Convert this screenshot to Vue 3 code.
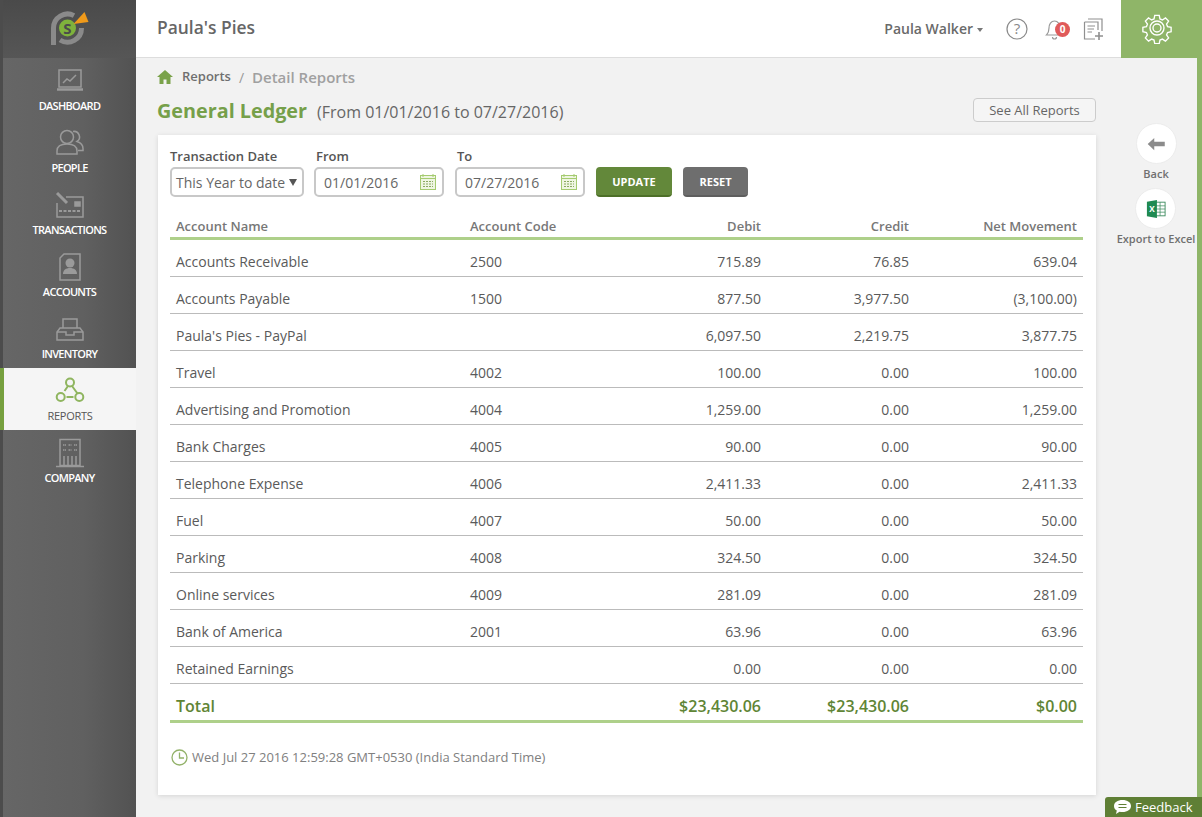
<script setup>
const navItems = [
  { label: 'DASHBOARD', icon: 'dashboard' },
  { label: 'PEOPLE', icon: 'people' },
  { label: 'TRANSACTIONS', icon: 'transactions' },
  { label: 'ACCOUNTS', icon: 'accounts' },
  { label: 'INVENTORY', icon: 'inventory' },
  { label: 'REPORTS', icon: 'reports', active: true },
  { label: 'COMPANY', icon: 'company' }
];

const rows = [
  ['Accounts Receivable', '2500', '715.89', '76.85', '639.04'],
  ['Accounts Payable', '1500', '877.50', '3,977.50', '(3,100.00)'],
  ["Paula's Pies - PayPal", '', '6,097.50', '2,219.75', '3,877.75'],
  ['Travel', '4002', '100.00', '0.00', '100.00'],
  ['Advertising and Promotion', '4004', '1,259.00', '0.00', '1,259.00'],
  ['Bank Charges', '4005', '90.00', '0.00', '90.00'],
  ['Telephone Expense', '4006', '2,411.33', '0.00', '2,411.33'],
  ['Fuel', '4007', '50.00', '0.00', '50.00'],
  ['Parking', '4008', '324.50', '0.00', '324.50'],
  ['Online services', '4009', '281.09', '0.00', '281.09'],
  ['Bank of America', '2001', '63.96', '0.00', '63.96'],
  ['Retained Earnings', '', '0.00', '0.00', '0.00']
];
</script>

<template>
  <div class="app">
    <aside class="sidebar">
      <div class="logo">
        <svg width="44" height="36" viewBox="0 0 44 36">
          <path d="M5.500 34V17A14 14 0 0 1 26 4.600" fill="none" stroke="#8a8a8a" stroke-width="5" />
          <path d="M33.500 17A14 14 0 0 1 12 29" fill="none" stroke="#8a8a8a" stroke-width="5" />
          <circle cx="19.500" cy="17" r="8.500" fill="#7fb23c" />
          <text x="19.500" y="22.500" class="logo-s" text-anchor="middle">S</text>
          <path d="M25.500 13L36.500 1L40.500 11Z" fill="#f09a1a" />
        </svg>
      </div>
      <nav class="nav">
        <div v-for="item in navItems" :key="item.label" class="nav-item" :class="{ active: item.active }">
          <svg width="30" height="30" viewBox="0 0 30 30" fill="none" stroke="#9a9a9a" stroke-width="1.500">
            <template v-if="item.icon === 'dashboard'">
              <rect x="4" y="4" width="22" height="17" />
              <path d="M2 23.500H28" stroke-width="2.500" />
              <path d="M8 17l4-4 3 2 6-6" />
            </template>
            <template v-else-if="item.icon === 'people'">
              <circle cx="12" cy="9" r="6.500" />
              <path d="M2 26v-3c0-5 4-7 10-7s10 2 10 7v3z" />
              <path d="M18 3.500a5.500 5.500 0 0 1 4 10c3 1 6 3 6 7v2h-5" />
            </template>
            <template v-else-if="item.icon === 'transactions'">
              <path d="M11 7H28V27H2V13" />
              <path d="M2 3l10 10" stroke-width="3" />
              <rect x="20" y="12" width="5" height="4" fill="#9a9a9a" />
              <path d="M4 21H26" stroke-dasharray="3 1.500" stroke-width="2" />
            </template>
            <template v-else-if="item.icon === 'accounts'">
              <path d="M9 2H25V28H5V6Z" />
              <circle cx="15" cy="11" r="4.500" fill="#9a9a9a" stroke="none" />
              <path d="M8 22c0-4 3-6 7-6s7 2 7 6z" fill="#9a9a9a" stroke="none" />
            </template>
            <template v-else-if="item.icon === 'inventory'">
              <path d="M8 14V5H22V14" />
              <path d="M5 14H25L28 18V26H2V18Z" />
              <path d="M2 18H11V21H19V18H28" />
            </template>
            <template v-else-if="item.icon === 'reports'">
              <g stroke="#8fb55f" stroke-width="2">
                <circle cx="15" cy="6.500" r="4" />
                <circle cx="5.700" cy="21" r="4" />
                <circle cx="24.300" cy="21" r="4" />
                <path d="M13 10l-3.500 5M17 10l5.500 7.500M11.500 21h7" />
              </g>
            </template>
            <template v-else>
              <rect x="5" y="1.500" width="20" height="26" />
              <path d="M1 28.500H29" />
              <path d="M8 7h3M13.500 7h3M19 7h3M8 12h3M13.500 12h3M19 12h3" stroke-dasharray="1.500 .5" />
              <path d="M9 18v9M13 18v9M17 18v9M21 18v9" />
            </template>
          </svg>
          <span>{{ item.label }}</span>
        </div>
      </nav>
    </aside>

    <div class="content">
      <header class="topbar">
        <h1 class="company">Paula's Pies</h1>
        <div class="top-right">
          <span class="user">Paula Walker<i class="caret"></i></span>
          <svg width="24" height="24" viewBox="0 0 24 24" class="top-icon help">
            <circle cx="12" cy="12" r="10" fill="none" stroke="#8a8a8a" stroke-width="1.200" />
            <text x="12" y="17" class="help-mark" text-anchor="middle">?</text>
          </svg>
          <div class="bell">
            <svg width="22" height="22" viewBox="0 0 22 22" fill="none" stroke="#999" stroke-width="1.200">
              <path d="M1.500 17c2-2 2.500-4 2.500-7 0-3.500 2-7 5.500-7s5.500 3.500 5.500 7c0 3 .5 5 2.500 7z" />
              <path d="M7.500 19a2 2 0 0 0 4 0" />
            </svg>
            <span class="badge">0</span>
          </div>
          <svg width="22" height="24" viewBox="0 0 22 24" fill="none" stroke="#8f8f8f" stroke-width="1.200" class="top-icon">
            <path d="M6 2H20V14M2.500 5H16V13M2.500 5V22H13" />
            <path d="M5.500 9H13M5.500 12H12M5.500 15H10" />
            <path d="M17 15V23M13 19H21" stroke-width="1.600" />
          </svg>
        </div>
        <div class="settings">
          <svg width="32" height="32" viewBox="0 0 32 32" fill="none" stroke="#fff">
            <path stroke-width="1.500" d="M13.500 2h5l.8 4 2.700 1.100 3.400-2.300 3.500 3.500-2.300 3.400 1.100 2.700 4 .8v5l-4 .8-1.100 2.700 2.300 3.400-3.500 3.500-3.400-2.300-2.700 1.100-.8 4h-5l-.8-4-2.700-1.100-3.400 2.300-3.500-3.500 2.300-3.400-1.100-2.700-4-.8v-5l4-.8 1.100-2.700-2.300-3.400 3.500-3.500 3.400 2.300 2.700-1.100z" transform="translate(1.600 1.600) scale(.9)" />
            <circle cx="16" cy="16" r="7" stroke-width="1.400" />
            <circle cx="16" cy="16" r="4" stroke-width="1.400" />
          </svg>
        </div>
      </header>

      <div class="body">
        <main class="main">
          <div class="breadcrumb">
            <svg width="16" height="14" viewBox="0 0 16 14"><path d="M8 0L16 7H13.500V14H9.500V9.500H6.500V14H2.500V7H0Z" fill="#7aa24a" /></svg>
            <span class="crumb">Reports</span>
            <span class="crumb-sep">/</span>
            <span class="crumb-current">Detail Reports</span>
          </div>
          <div class="title-row">
            <h2 class="title">General Ledger</h2>
            <span class="range">(From 01/01/2016 to 07/27/2016)</span>
            <button class="see-all">See All Reports</button>
          </div>

          <section class="card">
            <div class="filters">
              <div class="field first">
                <label>Transaction Date</label>
                <div class="input select">This Year to date<i class="select-arrow"></i></div>
              </div>
              <div class="field">
                <label>From</label>
                <div class="input date">
                  01/01/2016
                  <svg width="18" height="18" viewBox="0 0 18 18" fill="#eff6e2" stroke="#a5cb70"><rect x="1.500" y="2.500" width="15" height="14" /><path d="M4 1v3M14 1v3M1.500 5.500h15" /><path d="M4 8.500h10M4 11h10M4 13.500h10" stroke="#8aa860" stroke-dasharray="2 1" /></svg>
                </div>
              </div>
              <div class="field">
                <label>To</label>
                <div class="input date to">
                  07/27/2016
                  <svg width="18" height="18" viewBox="0 0 18 18" fill="#eff6e2" stroke="#a5cb70"><rect x="1.500" y="2.500" width="15" height="14" /><path d="M4 1v3M14 1v3M1.500 5.500h15" /><path d="M4 8.500h10M4 11h10M4 13.500h10" stroke="#8aa860" stroke-dasharray="2 1" /></svg>
                </div>
              </div>
              <button class="btn update">UPDATE</button>
              <button class="btn reset">RESET</button>
            </div>

            <table class="ledger">
              <colgroup>
                <col style="width: 294px" />
                <col style="width: 150px" />
                <col style="width: 153px" />
                <col style="width: 148px" />
                <col style="width: 168px" />
              </colgroup>
              <thead>
                <tr>
                  <th>Account Name</th>
                  <th>Account Code</th>
                  <th class="num">Debit</th>
                  <th class="num">Credit</th>
                  <th class="num">Net Movement</th>
                </tr>
              </thead>
              <tbody>
                <tr v-for="row in rows" :key="row[0]">
                  <td v-for="(cell, i) in row" :key="i" :class="{ num: i > 1 }">{{ cell }}</td>
                </tr>
              </tbody>
              <tfoot>
                <tr>
                  <td>Total</td>
                  <td></td>
                  <td class="num">$23,430.06</td>
                  <td class="num">$23,430.06</td>
                  <td class="num">$0.00</td>
                </tr>
              </tfoot>
            </table>

            <div class="stamp">
              <svg width="17" height="17" viewBox="0 0 17 17" fill="none" stroke="#93b26a" stroke-width="1.300"><circle cx="8.500" cy="8.500" r="7.500" /><path d="M8.500 3.500V9H13" /></svg>
              Wed Jul 27 2016 12:59:28 GMT+0530 (India Standard Time)
            </div>
          </section>
        </main>

        <aside class="actions">
          <div class="action">
            <div class="circle">
              <svg width="20" height="14" viewBox="0 0 22 16"><path d="M9 1L1.500 8 9 15V10.500H21V5.500H9Z" fill="#8b8b8b" /></svg>
            </div>
            <span>Back</span>
          </div>
          <div class="action">
            <div class="circle">
              <svg width="20" height="20" viewBox="0 0 22 22">
                <rect x="10" y="3.500" width="11" height="15" fill="#fff" stroke="#3d8b5f" />
                <path d="M10 7.500H21M10 11H21M10 14.500H21M15.500 3.500V18.500" stroke="#3d8b5f" stroke-width=".8" />
                <path d="M1 3L12 1V21L1 19Z" fill="#1f8a52" />
                <text x="6.500" y="14" class="xl" text-anchor="middle">X</text>
              </svg>
            </div>
            <span>Export to Excel</span>
          </div>
        </aside>
      </div>
    </div>

    <div class="feedback">
      <svg width="19" height="16" viewBox="0 0 19 16"><path d="M9.500 1C14.500 1 18 3.500 18 7s-3.500 6-8.500 6c-1 0-2 0-3-.3L3 15l.8-3.500C2 10.500 1 9 1 7c0-3.500 3.500-6 8.500-6z" fill="#fff" /><path d="M5.500 5.500h8M5.500 8.500h8" stroke="#5f7f35" /></svg>
      Feedback
    </div>
  </div>
</template>

<style>
html, body {
  margin: 0;
  background: #f2f2f2;
}
</style>

<style scoped>
.app {
  position: relative;
  display: flex;
  width: 1202px;
  height: 817px;
  overflow: hidden;
  font-family: "Open Sans", "Liberation Sans", sans-serif;
  color: #555;
}

.sidebar {
  flex: 0 0 136px;
  border-left: 3px solid #4c4c4c;
  box-sizing: border-box;
  background: linear-gradient(to right, #666 0%, #606060 60%, #525252 100%);
}

.logo {
  height: 58px;
  display: flex;
  align-items: center;
  justify-content: center;
  box-sizing: border-box;
  background: linear-gradient(to bottom, #4a4a4a, #565656);
}

.logo-s {
  font: 700 15px "Open Sans", sans-serif;
  fill: #4b4b4b;
}

.nav-item {
  height: 62px;
  box-sizing: border-box;
  padding-top: 8px;
  display: flex;
  flex-direction: column;
  align-items: center;
  font-size: 11px;
  font-weight: 600;
  letter-spacing: -0.7px;
  color: #fff;
}

.nav-item span {
  margin-top: 2px;
  line-height: 16px;
}

.nav-item.active {
  background: #f5f5f5;
  color: #555;
  font-weight: 400;
  letter-spacing: -0.3px;
  border-left: 4px solid #76a03f;
  margin-left: -3px;
}

.content {
  flex: 1;
  min-width: 0;
  display: flex;
  flex-direction: column;
  border-right: 5px solid #8fb568;
}

.topbar {
  flex: 0 0 58px;
  box-sizing: border-box;
  display: flex;
  align-items: center;
  padding-left: 21px;
  background: #fff;
  border-bottom: 1px solid #ddd;
  margin-right: -5px;
}

.company {
  margin: 0 0 3px;
  font-size: 17.400px;
  font-weight: 600;
  color: #666;
}

.top-right {
  margin-left: auto;
  display: flex;
  align-items: center;
}

.user {
  font-size: 14px;
  font-weight: 600;
  color: #6a6a6a;
  margin-right: 22px;
  padding-bottom: 1px;
}

.caret {
  display: inline-block;
  margin-left: 4px;
  vertical-align: 2px;
  border-left: 3.500px solid transparent;
  border-right: 3.500px solid transparent;
  border-top: 4px solid #777;
}

.help-mark {
  font: 400 15px "Open Sans", sans-serif;
  fill: #888;
}

.bell {
  position: relative;
  width: 28px;
  margin-left: 16px;
  display: flex;
}

.badge {
  position: absolute;
  left: 10px;
  top: 4px;
  width: 15px;
  height: 15px;
  border-radius: 50%;
  background: #e05a5a;
  color: #fff;
  font-size: 10px;
  font-weight: 700;
  line-height: 15px;
  text-align: center;
}

.top-icon {
  display: block;
}

.bell + .top-icon {
  margin-left: 9px;
  margin-right: 17px;
}

.settings {
  width: 81px;
  height: 58px;
  box-sizing: border-box;
  padding: 0 10px 2px 0;
  background: #8fb568;
  display: flex;
  align-items: center;
  justify-content: center;
  margin-bottom: -1px;
}

.body {
  flex: 1;
  min-height: 0;
  display: flex;
  background: #f2f2f2;
}

.main {
  width: 960px;
  flex: none;
  box-sizing: border-box;
  padding: 10px 0 0 22px;
}

.breadcrumb {
  display: flex;
  align-items: center;
  height: 18px;
  margin-bottom: 10px;
  margin-left: -1px;
}

.crumb {
  margin-left: 9px;
  margin-bottom: 2px;
  font-size: 13px;
  font-weight: 600;
  color: #6f6f6f;
}

.crumb-sep {
  margin: 0 8px 0 8px;
  font-size: 14px;
  color: #999;
}

.crumb-current {
  font-size: 15px;
  font-weight: 600;
  color: #a0a0a0;
}

.title-row {
  display: flex;
  align-items: center;
  height: 28px;
  margin-bottom: 11px;
}

.title {
  margin: 0 0 0 -1px;
  font-size: 19.800px;
  font-weight: 700;
  color: #76a04a;
}

.range {
  margin-left: 10px;
  font-size: 16px;
  color: #666;
  padding-top: 3px;
}

.see-all {
  margin-left: auto;
  width: 123px;
  height: 24px;
  padding: 0;
  background: #f5f5f5;
  border: 1px solid #ccc;
  border-radius: 4px;
  font-family: inherit;
  font-size: 13px;
  color: #666;
}

.card {
  width: 938px;
  height: 660px;
  box-sizing: border-box;
  padding: 13px 13px 0 12px;
  background: #fff;
  box-shadow: 0 1px 5px rgba(0, 0, 0, 0.12);
}

.filters {
  display: flex;
  align-items: flex-end;
  height: 49px;
  margin-bottom: 14px;
}

.field {
  display: flex;
  flex-direction: column;
  margin-right: 11px;
}

.field.first {
  margin-right: 10px;
}

.field label {
  padding-left: 2px;
  font-size: 13px;
  font-weight: 600;
  line-height: 17px;
  color: #555;
  margin-bottom: 2px;
}

.field.first label {
  padding-left: 0;
}

.input {
  height: 30px;
  box-sizing: border-box;
  display: flex;
  align-items: center;
  border: 2px solid #c8c8c8;
  border-radius: 5px;
  font-size: 14px;
  color: #666;
  background: #fff;
}

.select {
  width: 134px;
  padding-left: 4px;
}

.select-arrow {
  margin-left: 4px;
  border-left: 4px solid transparent;
  border-right: 4px solid transparent;
  border-top: 7px solid #555;
}

.date {
  width: 130px;
  padding: 0 5px 0 8px;
  justify-content: space-between;
}

.btn {
  width: 76px;
  height: 30px;
  padding: 0;
  border: 0;
  border-radius: 4px;
  font-family: inherit;
  font-size: 11px;
  font-weight: 700;
  color: #fff;
}

.update {
  background: #63883a;
  border-bottom: 2px solid #4d6f28;
}

.reset {
  width: 65px;
  margin-left: 11px;
  background: #6e6e6e;
  border-bottom: 2px solid #5e5e5e;
}

.ledger {
  width: 913px;
  table-layout: fixed;
  border-collapse: separate;
  border-spacing: 0;
  font-size: 14px;
}

.ledger th {
  height: 29px;
  box-sizing: border-box;
  padding: 3px 6px 0;
  font-size: 13px;
  font-weight: 600;
  text-align: left;
  color: #777;
  border-bottom: 3px solid #aed08a;
}

.ledger td {
  height: 37px;
  box-sizing: border-box;
  padding: 7px 6px 0;
  color: #5a5a5a;
  border-bottom: 1px solid #bbb;
}

.ledger .num {
  text-align: right;
}

.ledger tfoot td {
  height: 39px;
  padding-top: 8px;
  font-size: 16px;
  font-weight: 600;
  color: #5f8535;
  border-bottom: 3px solid #aed08a;
}

.stamp {
  display: flex;
  align-items: center;
  gap: 4px;
  margin-top: 25px;
  padding-left: 1px;
  font-size: 13px;
  color: #808080;
}

.actions {
  flex: 1;
  min-width: 0;
  padding: 65px 0 0 19px;
  display: flex;
  flex-direction: column;
  align-items: center;
  overflow: hidden;
}

.action {
  display: flex;
  flex-direction: column;
  align-items: center;
  height: 65px;
  font-size: 11px;
  font-weight: 600;
  color: #707070;
  white-space: nowrap;
}

.circle {
  width: 41px;
  height: 41px;
  flex: none;
  border-radius: 50%;
  background: #fff;
  border: 1px solid #ececec;
  box-sizing: border-box;
  display: flex;
  align-items: center;
  justify-content: center;
  margin-bottom: 2px;
}

.xl {
  font: 700 9px "Open Sans", sans-serif;
  fill: #fff;
}

.feedback {
  position: absolute;
  right: 0;
  bottom: 0;
  width: 97px;
  height: 20px;
  box-sizing: border-box;
  display: flex;
  align-items: center;
  gap: 3px;
  padding-left: 8px;
  background: #5f7f35;
  border-top-left-radius: 3px;
  color: #fff;
  font-size: 13px;
}
</style>
